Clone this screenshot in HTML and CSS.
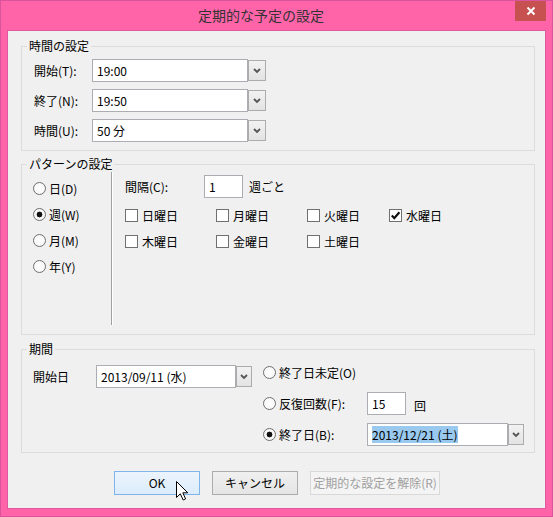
FILE: index.html
```html
<!DOCTYPE html>
<html lang="ja">
<head>
<meta charset="utf-8">
<title>定期的な予定の設定</title>
<link rel="stylesheet" href="styles.css">
</head>
<body>
<div class="window">
  <div class="titlebar">
    <div class="title">定期的な予定の設定</div>
    <div class="close"><svg width="10" height="10" viewBox="0 0 10 10"><path d="M1.5 1.5L8.5 8.5M8.5 1.5L1.5 8.5" stroke="#fff" stroke-width="2"/></svg></div>
  </div>
  <div class="client">
    <section class="group group-time">
      <div class="legend">時間の設定</div>
      <div class="time-grid">
        <span class="lbl">開始(T):</span>
        <div class="combo"><div class="field time">19:00</div><div class="drop"><svg width="8" height="6" viewBox="0 0 8 6"><path d="M1 1L4 4L7 1" fill="none" stroke="#555" stroke-width="1.8"/></svg></div></div>
        <span class="lbl">終了(N):</span>
        <div class="combo"><div class="field time">19:50</div><div class="drop"><svg width="8" height="6" viewBox="0 0 8 6"><path d="M1 1L4 4L7 1" fill="none" stroke="#555" stroke-width="1.8"/></svg></div></div>
        <span class="lbl">時間(U):</span>
        <div class="combo"><div class="field time">50 分</div><div class="drop"><svg width="8" height="6" viewBox="0 0 8 6"><path d="M1 1L4 4L7 1" fill="none" stroke="#555" stroke-width="1.8"/></svg></div></div>
      </div>
    </section>

    <section class="group group-pattern">
      <div class="legend">パターンの設定</div>
      <div class="pattern">
        <div class="freq">
          <div class="opt"><span class="radio"></span><span>日(D)</span></div>
          <div class="opt"><span class="radio on"></span><span>週(W)</span></div>
          <div class="opt"><span class="radio"></span><span>月(M)</span></div>
          <div class="opt"><span class="radio"></span><span>年(Y)</span></div>
        </div>
        <div class="divider"></div>
        <div class="weekly">
          <div class="interval">
            <span class="interval-label">間隔(C):</span>
            <div class="field num">1</div>
            <span class="unit">週ごと</span>
          </div>
          <div class="days">
            <div class="opt"><span class="check"></span><span>日曜日</span></div>
            <div class="opt"><span class="check"></span><span>月曜日</span></div>
            <div class="opt"><span class="check"></span><span>火曜日</span></div>
            <div class="opt"><span class="check"><svg width="11" height="11" viewBox="0 0 11 11"><path d="M1.8 5.6L4.3 8.2L9.4 2.2" fill="none" stroke="#111" stroke-width="2.2"/></svg></span><span>水曜日</span></div>
            <div class="opt"><span class="check"></span><span>木曜日</span></div>
            <div class="opt"><span class="check"></span><span>金曜日</span></div>
            <div class="opt"><span class="check"></span><span>土曜日</span></div>
          </div>
        </div>
      </div>
    </section>

    <section class="group group-range">
      <div class="legend">期間</div>
      <div class="range">
        <div class="start">
          <span class="start-label">開始日</span>
          <div class="combo"><div class="field date-start">2013/09/11 (水)</div><div class="drop small"><svg width="8" height="6" viewBox="0 0 8 6"><path d="M1 1L4 4L7 1" fill="none" stroke="#555" stroke-width="1.8"/></svg></div></div>
        </div>
        <div class="end-options">
          <div class="opt"><span class="radio"></span><span>終了日未定(O)</span></div>
          <div></div>
          <div class="opt"><span class="radio"></span><span>反復回数(F):</span></div>
          <div class="count"><div class="field num">15</div><span class="unit-kai">回</span></div>
          <div class="opt"><span class="radio on"></span><span>終了日(B):</span></div>
          <div class="combo"><div class="field date-end"><span class="sel">2013/12/21 (土)</span></div><div class="drop small"><svg width="8" height="6" viewBox="0 0 8 6"><path d="M1 1L4 4L7 1" fill="none" stroke="#555" stroke-width="1.8"/></svg></div></div>
        </div>
      </div>
    </section>

    <div class="buttons">
      <div class="btn default">OK</div>
      <div class="btn">キャンセル</div>
      <div class="btn disabled">定期的な設定を解除(R)</div>
    </div>
  </div>
  <svg class="cursor" width="13" height="20" viewBox="0 0 13 20"><path d="M0.5 0.5L0.5 16.5L4.3 12.8L7.2 19L9.6 17.9L6.8 11.8L11.8 11.8Z" fill="#fff" stroke="#000" stroke-width="1" stroke-linejoin="miter"/></svg>
</div>
</body>
</html>
```
FILE: styles.css
```css
html, body {
  margin: 0;
  padding: 0;
  background: #ffffff;
}

body {
  font-family: "Noto Sans CJK JP", "Noto Sans", sans-serif;
  font-size: 12px;
  color: #000;
}

.window {
  position: relative;
  width: 553px;
  height: 517px;
  box-sizing: border-box;
  border: 1px solid #d9549c;
  background: #ff64a9;
  display: flex;
  flex-direction: column;
}

.titlebar {
  height: 29px;
  display: flex;
  align-items: flex-start;
}

.title {
  flex: 1;
  text-align: center;
  padding-left: 6px;
  font-size: 14px;
  line-height: 29px;
  color: #333;
}

.close {
  width: 31px;
  height: 20px;
  margin-right: 6px;
  background: #c75050;
  display: flex;
  align-items: center;
  justify-content: center;
}

.client {
  flex: 1;
  margin: 0 6px 7px 6px;
  border: 1px solid #e0589f;
  background: #f0f0f0;
  display: flex;
  flex-direction: column;
  align-items: flex-start;
}

.group {
  box-sizing: border-box;
  width: 514px;
  margin-left: 13px;
  border: 1px solid #dcdcdc;
}

.group-time { margin-top: 15px; height: 105px; }
.group-pattern { margin-top: 13px; height: 171px; }
.group-range { margin-top: 14px; height: 104px; }

.legend {
  width: fit-content;
  height: 16px;
  line-height: 16px;
  margin: -9px 0 -7px 5px;
  padding: 0 2px;
  background: #f0f0f0;
  color: #000;
}

/* fields */
.field {
  box-sizing: border-box;
  height: 23px;
  border: 1px solid #abadb3;
  background: #fff;
  padding-left: 4px;
  line-height: 21px;
  white-space: nowrap;
}

.combo {
  display: flex;
  align-items: flex-start;
}

.drop {
  box-sizing: border-box;
  width: 18px;
  height: 21px;
  margin-top: 1px;
  border: 1px solid #acacac;
  background: linear-gradient(#f2f2f2, #e3e3e3);
  display: flex;
  align-items: center;
  justify-content: center;
}

.drop.small {
  width: 16px;
}

.field.time { width: 156px; }
.field.num { width: 39px; }
.field.date-start { width: 140px; }
.field.date-end { width: 141px; }

.sel {
  display: inline-block;
  background: #99c9ef;
  line-height: 17px;
}

/* time group */
.time-grid {
  display: grid;
  grid-template-columns: 58px auto;
  grid-auto-rows: 23px;
  row-gap: 7px;
  padding: 12px 0 0 12px;
  align-items: center;
}

/* options */
.opt {
  display: flex;
  align-items: center;
  gap: 3px;
  white-space: nowrap;
}

.radio {
  box-sizing: border-box;
  width: 13px;
  height: 13px;
  border-radius: 50%;
  border: 1px solid #6f6f6f;
  background: radial-gradient(circle, #ffffff 0%, #f4f4f4 100%);
  flex: none;
}

.radio.on {
  background: radial-gradient(circle, #111 0, #111 2.6px, #f7f7f7 3.2px);
}

.check {
  box-sizing: border-box;
  width: 13px;
  height: 13px;
  border: 1px solid #707070;
  background: #fff;
  display: flex;
  align-items: center;
  justify-content: center;
  flex: none;
  margin-right: 1px;
}

/* pattern group */
.pattern {
  display: flex;
  align-items: flex-start;
}

.freq {
  box-sizing: border-box;
  width: 89px;
  padding: 10px 0 0 11px;
  display: grid;
  grid-auto-rows: 26px;
}

.divider {
  width: 1px;
  height: 153px;
  margin-top: 7px;
  background: #a0a0a0;
  box-shadow: 1px 0 0 #ffffff;
}

.weekly {
  padding: 10px 0 0 13px;
}

.interval {
  display: flex;
  align-items: center;
  height: 23px;
}

.interval-label {
  width: 79px;
}

.unit {
  margin-left: 6px;
}

.days {
  margin-top: 4px;
  display: grid;
  grid-template-columns: 91px 91px 82px auto;
  grid-auto-rows: 26px;
}

/* range group */
.range {
  display: flex;
  align-items: flex-start;
  padding: 11px 0 0 11px;
}

.start {
  display: flex;
  align-items: center;
  margin-top: 4px;
}

.start-label {
  width: 63px;
}

.end-options {
  margin-left: 11px;
  display: grid;
  grid-template-columns: 104px auto;
  grid-auto-rows: 23px;
  row-gap: 8px;
  align-items: center;
}

.count {
  display: flex;
  align-items: center;
}

.unit-kai {
  margin-left: 8px;
  padding-top: 4px;
}

/* buttons */
.buttons {
  display: flex;
  gap: 12px;
  margin-top: 18px;
  padding-left: 106px;
}

.btn {
  box-sizing: border-box;
  width: 86px;
  height: 24px;
  border: 1px solid #acacac;
  background: linear-gradient(#f0f0f0, #e5e5e5);
  text-align: center;
  line-height: 22px;
  white-space: nowrap;
}

.btn.default {
  border-color: #7eb4ea;
  background: linear-gradient(#ecf4fc, #dcecfc);
}

.btn.disabled {
  width: 130px;
  border-color: #d9d9d9;
  background: #f4f4f4;
  color: #a0a0a0;
}

.cursor {
  position: absolute;
  left: 175px;
  top: 480px;
}
```
